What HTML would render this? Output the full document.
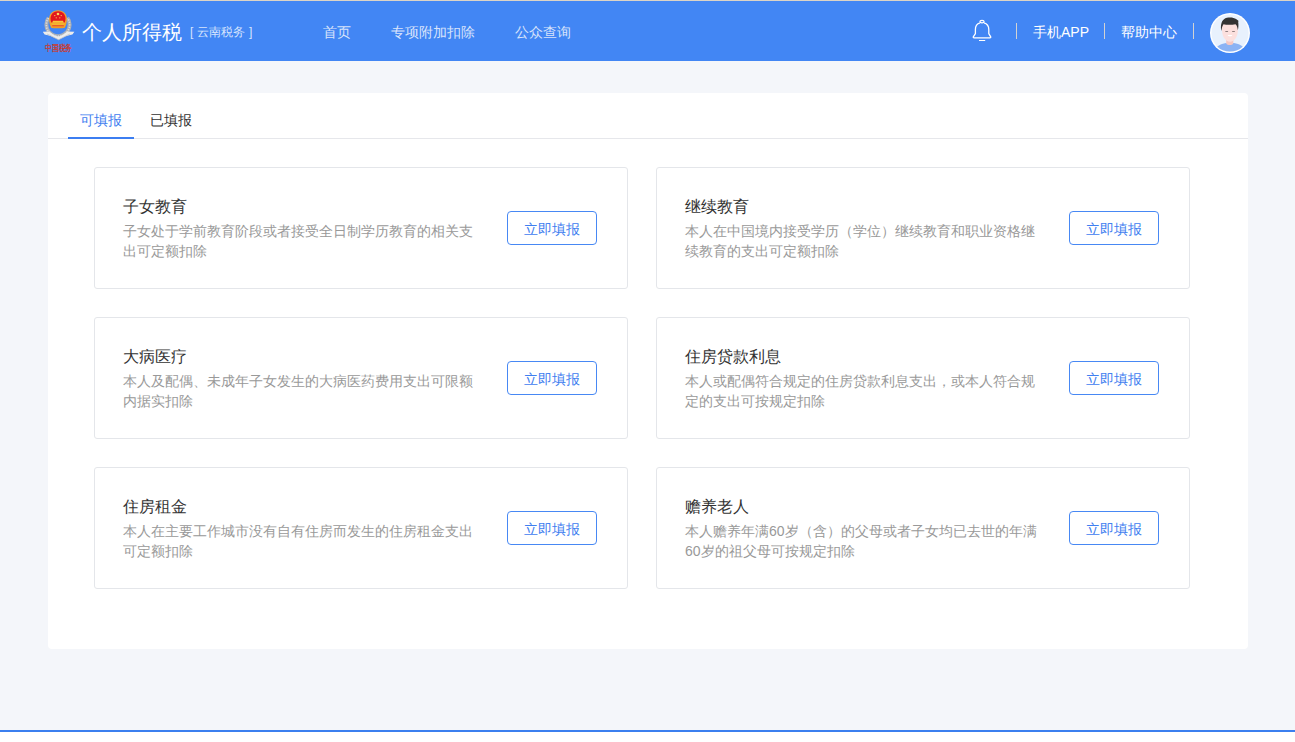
<!DOCTYPE html>
<html><head><meta charset="utf-8">
<style>
*{margin:0;padding:0;box-sizing:border-box}
html,body{width:1295px;height:742px;overflow:hidden;background:#fff;font-family:"Liberation Sans",sans-serif}
.topline{position:absolute;left:0;top:0;width:1295px;height:1px;background:#DCD4C6}
.header{position:absolute;left:0;top:1px;width:1295px;height:60px;background:#4286F4}
.bg{position:absolute;left:0;top:61px;width:1295px;height:669px;background:#F4F6FA}
.botline{position:absolute;left:0;top:730px;width:1295px;height:2px;background:#3B7FEF}
.abs{position:absolute;white-space:nowrap}
.logo{position:absolute;left:42px;top:9px;width:34px;height:44px}
.brand{position:absolute;left:82px;top:17px;font-size:20px;line-height:28px;color:#fff;font-weight:300}
.sub{position:absolute;left:190px;top:23px;font-size:12px;line-height:16px;color:#D6E4FD;word-spacing:.5px}
.nav{position:absolute;top:21px;font-size:14px;line-height:20px;color:#D8E3FB}
.rt{position:absolute;top:21px;font-size:14px;line-height:20px;color:#fff}
.sep{position:absolute;top:22px;width:1px;height:16px;background:#D2D2D2}
.avatar{position:absolute;left:1210px;top:12px;width:40px;height:40px}
.panel{position:absolute;left:48px;top:93px;width:1200px;height:556px;background:#fff;border-radius:4px}
.tabline{position:absolute;left:0;top:45px;width:1200px;height:1px;background:#E6E7EB}
.tab{position:absolute;top:17px;font-size:14px;line-height:20px}
.tab.on{color:#3F80F0}
.tab.off{color:#333}
.ul{position:absolute;left:20px;top:44px;width:66px;height:2px;background:#3C7EF1}
.card{position:absolute;width:534px;height:122px;border:1px solid #E4E6EA;border-radius:3px;background:#fff}
.card .t{position:absolute;left:28px;top:28px;font-size:16px;line-height:22px;color:#333;white-space:nowrap}
.card .d{position:absolute;left:28px;top:53px;width:358px;font-size:14px;line-height:20px;color:#999}
.card .b{position:absolute;left:412px;top:43px;width:90px;height:34px;border:1px solid #4788F4;border-radius:4px;color:#3F80F0;font-size:14px;line-height:32px;padding-top:1px;text-align:center}
</style></head><body>
<div class="topline"></div>
<div class="header">
  <svg class="abs" style="left:40px;top:5px" width="38" height="48" viewBox="0 0 38 48">
    <path d="M8.6 12 C5.6 15.5 5.6 22 8.8 25.8 C11.5 28.8 14.5 30 18 30.2 C21.5 30 24.5 28.8 27.2 25.8 C30.4 22 30.4 15.5 27.4 12" fill="none" stroke="#A9AEB6" stroke-width="4"/>
    <path d="M8.6 12 C5.6 15.5 5.6 22 8.8 25.8 C11.5 28.8 14.5 30 18 30.2 C21.5 30 24.5 28.8 27.2 25.8 C30.4 22 30.4 15.5 27.4 12" fill="none" stroke="#DADCE0" stroke-width="1.6" stroke-dasharray="1.2 1.3"/>
    <path d="M18 4.2 C23.5 4.2 26.9 8 26.9 13 C26.9 17 26 20 24.5 22 H11.5 C10 20 9.1 17 9.1 13 C9.1 8 12.5 4.2 18 4.2Z" fill="#F4A12A"/>
    <path d="M18 5.3 C22.6 5.3 25.5 8.4 25.5 12.6 C25.5 14.3 25.2 15.6 24.7 16.6 H11.3 C10.8 15.6 10.5 14.3 10.5 12.6 C10.5 8.4 13.4 5.3 18 5.3Z" fill="#E2161E"/>
    <path d="M13 14.8 H23 L23.8 16.8 H12.2Z" fill="#F9C83A"/>
    <path d="M11.2 17.2 H24.8 L24 19.2 H12Z" fill="#F6B530"/>
    <path d="M12 19.2 H24 L23.4 20.4 H12.6Z" fill="#E8452A"/>
    <path d="M12.6 20.4 H23.4 L22.8 22.3 H13.2Z" fill="#F29A28"/>
    <circle cx="18" cy="8" r="1.3" fill="#FBD860"/>
    <circle cx="14.8" cy="9.6" r=".65" fill="#FBD860"/>
    <circle cx="21.2" cy="9.6" r=".65" fill="#FBD860"/>
    <circle cx="16.2" cy="11.8" r=".6" fill="#FBD860"/>
    <circle cx="19.8" cy="11.8" r=".6" fill="#FBD860"/>
    <path d="M2.8 25.8 L9.5 25.6 C12.5 28.8 15.5 30.2 18.3 30.5 C21 30.2 24 28.8 27 25.6 L34.4 25.8 L32.4 28.4 C28 28.8 23.5 31.2 18.6 33.8 C13.8 31.2 9 28.8 4.6 28.4 Z" fill="#ECECEC"/>
    <path d="M7 28 C10.5 29.5 14 31.5 18.6 33.8 C23 31.5 26.5 29.5 30 28" fill="none" stroke="#BDBFC3" stroke-width=".7"/>
    <text x="4.8" y="44.8" font-size="8.8" fill="#D03624" stroke="#D03624" stroke-width=".25" textLength="27.6" lengthAdjust="spacingAndGlyphs" font-family="Liberation Serif, serif">中国税务</text>
  </svg>
  <div class="brand">个人所得税</div>
  <div class="sub">[ 云南税务 ]</div>
  <div class="nav" style="left:323px">首页</div>
  <div class="nav" style="left:391px">专项附加扣除</div>
  <div class="nav" style="left:515px">公众查询</div>
  <svg class="abs" style="left:970px;top:17px" width="24" height="26" viewBox="0 0 24 26">
    <ellipse cx="12" cy="3.6" rx="2.1" ry="1.3" fill="none" stroke="#fff" stroke-width="1.2"/>
    <path d="M10 4.9 C7 5.8 5.4 8.3 5.4 11.5 V15.6 L3.4 18.6 C3 19.3 3.3 19.9 4.1 19.9 H19.9 C20.7 19.9 21 19.3 20.6 18.6 L18.8 15.6 V11.5 C18.8 8.3 17 5.8 14 4.9" fill="none" stroke="#fff" stroke-width="1.3" stroke-linejoin="round"/>
    <rect x="9" y="22" width="6.2" height="1" fill="#fff"/>
  </svg>
  <div class="sep" style="left:1016px"></div>
  <div class="rt" style="left:1033px">手机APP</div>
  <div class="sep" style="left:1104px"></div>
  <div class="rt" style="left:1121px">帮助中心</div>
  <div class="sep" style="left:1193px"></div>
  <svg class="avatar" viewBox="0 0 40 40">
    <defs><clipPath id="cc"><circle cx="20" cy="20" r="18.6"/></clipPath></defs>
    <circle cx="20" cy="20" r="20" fill="#fff"/>
    <circle cx="20" cy="20" r="18.6" fill="#E8F1FD"/>
    <g clip-path="url(#cc)">
      <path d="M4 40 C5 34 10 31 16 30 H24 C30 31 35 34 36 40 Z" fill="#8BB3F4"/>
      <path d="M16.2 25 H23.3 V30.5 C22 32.5 17.5 32.5 16.2 30.5 Z" fill="#F6C8C2"/>
      <path d="M11.8 11 C11.8 19 12.5 23 14.5 25.5 C16 27.5 17.5 28.7 20 28.7 C22.5 28.7 24 27.5 25.5 25.5 C27.5 23 28.2 19 28.2 11 Z" fill="#FCE0DE"/>
      <path d="M11.3 18 C10.5 13 11 8.5 14 6.2 C16.5 4.5 20.5 4.3 23.5 5 C25.5 5.5 27 6.5 27.8 7.2 C28.5 7.6 28.6 8.3 28.2 9 C28.6 11.5 28.5 14.5 27.8 17.2 C27.5 14.5 27 12.5 25.5 11.2 C21 12.2 16 11.8 13.5 11.2 C12.2 12.8 11.8 15.5 11.3 18 Z" fill="#333"/>
      <rect x="15.2" y="18.2" width="3" height=".9" rx=".45" fill="#6E6262"/>
      <rect x="22" y="18.2" width="3" height=".9" rx=".45" fill="#6E6262"/>
      <path d="M17.6 21.9 H22.4 C22 23.6 18 23.6 17.6 21.9 Z" fill="#fff"/>
      <path d="M8 35.5 L10 35" stroke="#B5CEF8" stroke-width=".6"/>
    </g>
  </svg>
</div>
<div class="bg"></div>
<div class="botline"></div>

<div class="panel">
  <div class="tabline"></div>
  <div class="tab on" style="left:32px">可填报</div>
  <div class="tab off" style="left:102px">已填报</div>
  <div class="ul"></div>

  <div class="card" style="left:46px;top:74px">
    <div class="t">子女教育</div>
    <div class="d">子女处于学前教育阶段或者接受全日制学历教育的相关支出可定额扣除</div>
    <div class="b">立即填报</div>
  </div>
  <div class="card" style="left:608px;top:74px">
    <div class="t">继续教育</div>
    <div class="d">本人在中国境内接受学历（学位）继续教育和职业资格继续教育的支出可定额扣除</div>
    <div class="b">立即填报</div>
  </div>
  <div class="card" style="left:46px;top:224px">
    <div class="t">大病医疗</div>
    <div class="d">本人及配偶、未成年子女发生的大病医药费用支出可限额内据实扣除</div>
    <div class="b">立即填报</div>
  </div>
  <div class="card" style="left:608px;top:224px">
    <div class="t">住房贷款利息</div>
    <div class="d">本人或配偶符合规定的住房贷款利息支出，或本人符合规定的支出可按规定扣除</div>
    <div class="b">立即填报</div>
  </div>
  <div class="card" style="left:46px;top:374px">
    <div class="t">住房租金</div>
    <div class="d">本人在主要工作城市没有自有住房而发生的住房租金支出可定额扣除</div>
    <div class="b">立即填报</div>
  </div>
  <div class="card" style="left:608px;top:374px">
    <div class="t">赡养老人</div>
    <div class="d">本人赡养年满60岁（含）的父母或者子女均已去世的年满60岁的祖父母可按规定扣除</div>
    <div class="b">立即填报</div>
  </div>
</div>
</body></html>
